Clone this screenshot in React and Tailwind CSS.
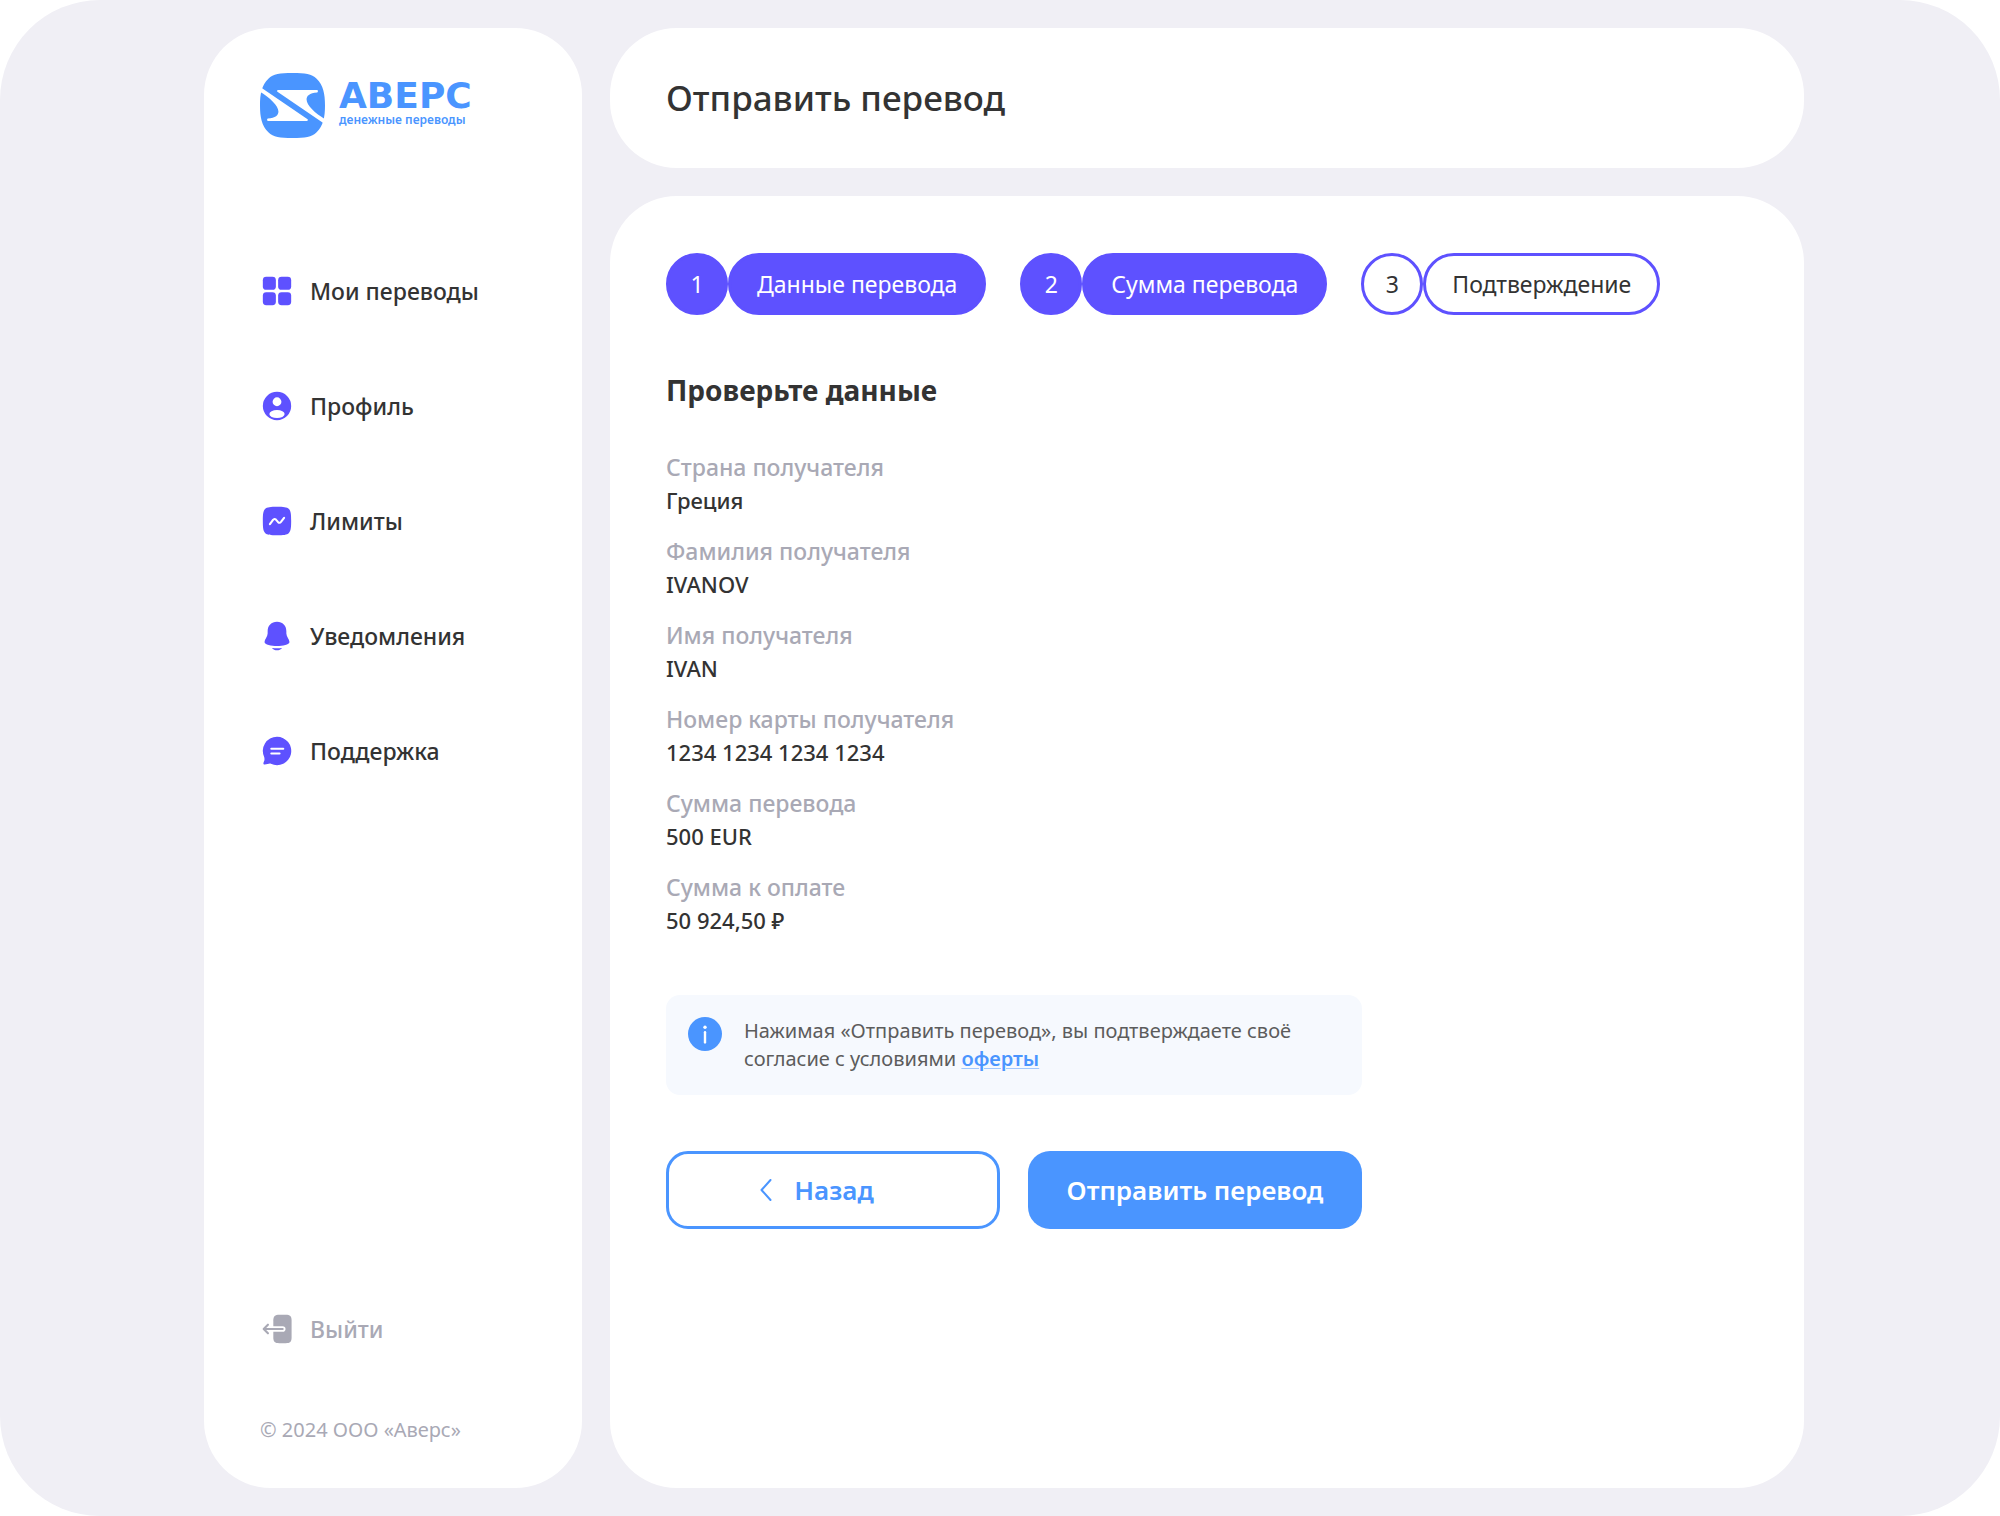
import React from 'react';

const LogoMark = () => (
    <svg viewBox="0 0 194 194" className="w-[65px] h-[65px] shrink-0" aria-hidden="true">
        <path
            fill="#4A95FF"
            d="M97 0C135 0 154 2 169 17C189 37 194 62 194 97S189 157 169 177C154 192 135 194 97 194S40 192 25 177C5 157 0 132 0 97S5 37 25 17C40 2 59 0 97 0Z"
        />
        <g fill="#fff">
            <path d="M3 43L142 138Q145 142 140 143H23Q19 140 23 136C47 134 55 126 55 115C55 97 28 73 -2 55Z" />
            <path transform="rotate(180 97 97)" d="M3 43L142 138Q145 142 140 143H23Q19 140 23 136C47 134 55 126 55 115C55 97 28 73 -2 55Z" />
        </g>
    </svg>
);

const Icon = ({ children }) => (
    <svg viewBox="0 0 24 24" className="w-[34px] h-[34px] shrink-0" fill="currentColor" aria-hidden="true">
        {children}
    </svg>
);

const icons = {
    grid: (
        <Icon>
            <rect x="2" y="2" width="9.2" height="9.2" rx="2.4" />
            <rect x="12.8" y="2" width="9.2" height="9.2" rx="2.4" />
            <rect x="2" y="12.8" width="9.2" height="9.2" rx="2.4" />
            <rect x="12.8" y="12.8" width="9.2" height="9.2" rx="2.4" />
        </Icon>
    ),
    user: (
        <Icon>
            <circle cx="12" cy="12" r="10" />
            <circle cx="12" cy="9" r="3.1" fill="#fff" />
            <ellipse cx="12" cy="17.7" rx="5.4" ry="2.8" fill="#fff" />
        </Icon>
    ),
    limits: (
        <Icon>
            <path d="M12 2C16.5 2 19 2.2 20.4 3.6S22 7.5 22 12S21.8 19 20.4 20.4S16.5 22 12 22S5 21.8 3.6 20.4S2 16.5 2 12S2.2 5 3.6 3.6S7.5 2 12 2Z" />
            <path d="M7 14.2L9.2 11.2Q10.2 10 11.2 11L12.8 12.8Q13.8 13.8 14.8 12.6L17 9.8" fill="none" stroke="#fff" strokeWidth="1.5" strokeLinecap="round" strokeLinejoin="round" />
        </Icon>
    ),
    bell: (
        <Icon>
            <path d="M12 2C8 2 5.4 4.8 5.4 8.6V10.2C5.4 12.5 3.2 14.2 3.2 16.2C3.2 18.3 8 19 12 19S20.8 18.3 20.8 16.2C20.8 14.2 18.6 12.5 18.6 10.2V8.6C18.6 4.8 16 2 12 2Z" />
            <path d="M8.4 20.4Q12 20.9 15.6 20.4C14.7 21.5 13.4 22 12 22S9.3 21.5 8.4 20.4Z" />
        </Icon>
    ),
    chat: (
        <Icon>
            <path d="M12 2A10 10 0 1 1 7.7 21C6.4 20.6 5 21.6 3.3 21.6C2.2 21.6 2.2 20.6 2.8 19.4C3.2 18.4 3.3 17.8 3 16.4A10 10 0 0 1 12 2Z" />
            <path d="M8 10.4H16.4M8 13.8H13.8" fill="none" stroke="#fff" strokeWidth="1.5" strokeLinecap="round" />
        </Icon>
    ),
    exit: (
        <Icon>
            <path d="M9.4 6C9.4 3 10.6 2 13.6 2H18.2C21.2 2 22.3 3 22.3 6V18C22.3 21 21.2 22 18.2 22H13.6C10.6 22 9.4 21 9.4 18Z" />
            <path d="M7 12H16" fill="none" stroke="#fff" strokeWidth="4" strokeLinecap="round" />
            <path d="M5.6 9L2.6 12L5.6 15M2.8 12H16" fill="none" stroke="currentColor" strokeWidth="1.5" strokeLinecap="round" strokeLinejoin="round" />
        </Icon>
    ),
};

const menu = [
    { label: 'Мои переводы', icon: 'grid' },
    { label: 'Профиль', icon: 'user' },
    { label: 'Лимиты', icon: 'limits' },
    { label: 'Уведомления', icon: 'bell' },
    { label: 'Поддержка', icon: 'chat' },
];

const steps = [
    { label: 'Данные перевода', done: true },
    { label: 'Сумма перевода', done: true },
    { label: 'Подтверждение', done: false },
];

const details = [
    ['Страна получателя', 'Греция'],
    ['Фамилия получателя', 'IVANOV'],
    ['Имя получателя', 'IVAN'],
    ['Номер карты получателя', '1234 1234 1234 1234'],
    ['Сумма перевода', '500 EUR'],
    ['Сумма к оплате', '50 924,50 ₽'],
];

const Sidebar = () => (
    <aside className="w-[378px] shrink-0 flex flex-col bg-white rounded-[67px] px-14 pt-[45px] pb-11">
        <a href="#" className="flex items-center gap-[14px] text-[#4A95FF]">
            <LogoMark />
            <span className="flex flex-col pb-1">
                <span className="font-['DejaVu_Sans',sans-serif] text-[36px] leading-[32px] font-bold">АВЕРС</span>
                <span className="text-xs leading-4 font-semibold">денежные переводы</span>
            </span>
        </a>

        <nav className="mt-[136px] flex flex-col gap-[81px]">
            {menu.map((item) => (
                <a key={item.label} href="#" className="flex items-center gap-4 text-[23px] leading-[34px] font-medium">
                    <span className="text-[#5E51FF]">{icons[item.icon]}</span>
                    {item.label}
                </a>
            ))}
        </nav>

        <div className="mt-auto text-[#A9A9B5]">
            <button type="button" className="flex items-center gap-4 text-[23px] leading-[34px] font-medium">
                {icons.exit}
                Выйти
            </button>
            <p className="mt-[70px] text-xl leading-7">© 2024 ООО «Аверс»</p>
        </div>
    </aside>
);

const Step = ({ number, label, done }) => {
    const look = done ? 'bg-[#5E51FF] text-white' : 'text-[#333333]';
    return (
        <li className="flex text-[23px]">
            <span className={`w-[62px] h-[62px] flex items-center justify-center rounded-full border-[3px] border-[#5E51FF] ${look}`}>
                {number}
            </span>
            <span className={`h-[62px] flex items-center rounded-full border-[3px] border-[#5E51FF] px-[26px] ${look}`}>
                {label}
            </span>
        </li>
    );
};

export default function App() {
    return (
        <div className="min-h-screen flex gap-7 bg-[#F0EFF5] rounded-[100px] py-7 pl-[204px] pr-[196px] font-['Noto_Sans',sans-serif] text-[#333333]">
            <Sidebar />

            <div className="flex-1 flex flex-col gap-7">
                <header className="h-[140px] flex items-center bg-white rounded-[67px] px-14">
                    <h1 className="text-[35px] font-medium">Отправить перевод</h1>
                </header>

                <main className="flex-1 bg-white rounded-[67px] px-14 pt-[57px] pb-14">
                    <ol className="flex gap-[34px]">
                        {steps.map((step, i) => (
                            <Step key={step.label} number={i + 1} label={step.label} done={step.done} />
                        ))}
                    </ol>

                    <h2 className="mt-[55px] text-[28px] leading-10 font-bold">Проверьте данные</h2>

                    <dl className="mt-[41px] flex flex-col gap-[18px]">
                        {details.map(([name, value]) => (
                            <div key={name} className="leading-[33px]">
                                <dt className="text-[23px] font-medium text-[#A9A9B5]">{name}</dt>
                                <dd className="text-[22px] font-medium">{value}</dd>
                            </div>
                        ))}
                    </dl>

                    <div className="max-w-[696px] mt-[58px]">
                        <div className="flex items-start gap-[22px] rounded-[14px] bg-[#F6F9FE] px-[22px] py-[22px]">
                            <svg viewBox="0 0 34 34" className="w-[34px] h-[34px] shrink-0" aria-hidden="true">
                                <circle cx="17" cy="17" r="17" fill="#4A95FF" />
                                <circle cx="17" cy="10.3" r="1.7" fill="#fff" />
                                <path d="M17 15.2V25.4" stroke="#fff" strokeWidth="2.4" strokeLinecap="round" />
                            </svg>
                            <p className="text-xl leading-7 text-[#5C5C5C]">
                                Нажимая «Отправить перевод», вы подтверждаете своё согласие с условиями{' '}
                                <a href="#" className="font-semibold text-[#4A95FF] underline decoration-[#4A95FF]/50 decoration-1 underline-offset-2">оферты</a>
                            </p>
                        </div>

                        <div className="mt-14 grid grid-cols-2 gap-7 text-[26px] font-semibold">
                            <button type="button" className="h-[78px] flex items-center justify-center gap-[22px] pr-8 rounded-[22px] border-[3px] border-[#4A95FF] text-[#4A95FF]">
                                <svg viewBox="0 0 12 22" className="w-3 h-[22px]" fill="none" stroke="currentColor" strokeWidth="2" strokeLinecap="round" strokeLinejoin="round" aria-hidden="true">
                                    <path d="M10.5 1L1.5 11L10.5 21" />
                                </svg>
                                Назад
                            </button>
                            <button type="button" className="h-[78px] rounded-[22px] bg-[#4A95FF] text-white">
                                Отправить перевод
                            </button>
                        </div>
                    </div>
                </main>
            </div>
        </div>
    );
}
